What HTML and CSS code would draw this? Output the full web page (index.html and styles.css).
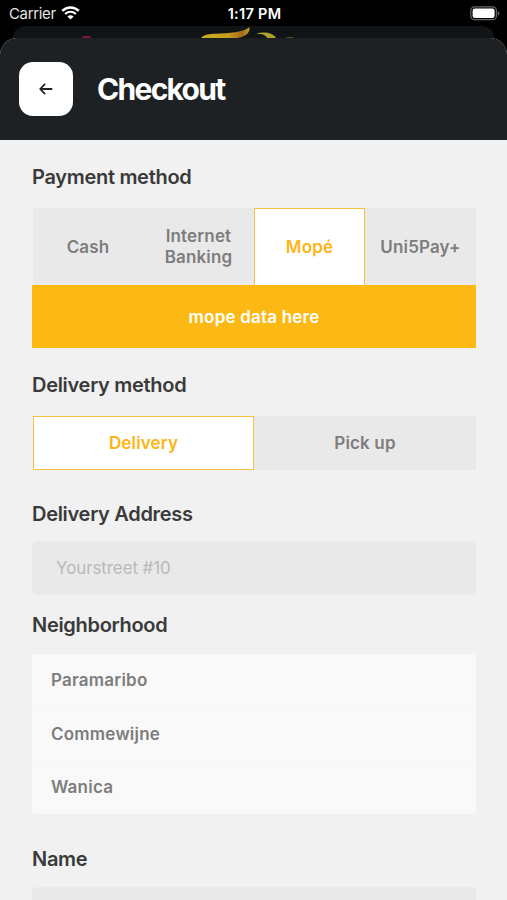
FILE: index.html
```html
<!DOCTYPE html>
<html lang="en">
<head>
    <meta charset="UTF-8">
    <meta name="viewport" content="width=device-width, initial-scale=1.0">
    <title>Checkout</title>
    <link rel="stylesheet" href="styles.css">
</head>
<body>

    <div class="status-bar">
        <div class="carrier">
            <span>Carrier</span>
            <svg class="wifi" width="19" height="14" viewBox="0 0 19 14">
                <path d="M1.2 4.9 C6 0.3 13 0.3 17.8 4.9" fill="none" stroke="#fff" stroke-width="2.6"/>
                <path d="M4.1 8 C7.3 5.1 11.7 5.1 14.9 8" fill="none" stroke="#fff" stroke-width="2.3"/>
                <path d="M6.4 10.4 C8.2 8.9 10.8 8.9 12.6 10.4 L9.5 13.6 Z" fill="#fff"/>
            </svg>
        </div>
        <span class="time">1:17 PM</span>
        <div class="power">
            <svg width="30" height="15" viewBox="0 0 30 15">
                <rect x="0.8" y="0.8" width="25.6" height="12.9" rx="3.8" fill="none" stroke="#666" stroke-width="1.2"/>
                <rect x="2.6" y="2.6" width="22" height="9.3" rx="2.2" fill="#fff"/>
                <path d="M27.8 5 C30 6 30 8.6 27.8 9.6 Z" fill="#666"/>
            </svg>
        </div>
    </div>

    <!-- previous screen peeking out behind the sheet -->
    <div class="back-card">
        <svg width="481" height="12" viewBox="13 26 481 12">
            <ellipse cx="86.5" cy="38.5" rx="5" ry="2.8" fill="#7d1836"/>
            <defs>
                <linearGradient id="gold" x1="0" y1="0" x2="1" y2="0">
                    <stop offset="0" stop-color="#c2b120"/>
                    <stop offset="0.55" stop-color="#c9a01c"/>
                    <stop offset="0.85" stop-color="#a8681a"/>
                    <stop offset="1" stop-color="#b5a524"/>
                </linearGradient>
            </defs>
            <path d="M201 38 C204 34.5 209 34 216 33.8 C229 33.5 244 32 249.5 27 C250 32 247 35 243 36.5 C240 37.6 238 38 234 38 Z" fill="url(#gold)"/>
            <path d="M256 33.5 C264 31 274 33 276 38 L267 38 C266 35 262 34 256 33.5 Z" fill="#aaa129"/>
            <path d="M285 38 C288 36.8 292 36.8 295 38 Z" fill="#65572c"/>
        </svg>
    </div>

    <div class="sheet">
        <header class="header">
            <button class="back-button" aria-label="Back">
                <svg width="14" height="12" viewBox="0 0 14 12" fill="none" stroke="#222" stroke-width="1.8" stroke-linecap="round" stroke-linejoin="round">
                    <path d="M12.6 6 H1.5 M5.6 1.4 L1.2 6 L5.6 10.6"/>
                </svg>
            </button>
            <h1>Checkout</h1>
        </header>

        <main class="content">
            <h2>Payment method</h2>
            <div class="tabs payment-tabs">
                <div class="tab">Cash</div>
                <div class="tab">Internet Banking</div>
                <div class="tab active">Mopé</div>
                <div class="tab">Uni5Pay+</div>
            </div>
            <div class="payment-data">mope data here</div>

            <h2 class="delivery-title">Delivery method</h2>
            <div class="tabs delivery-tabs">
                <div class="tab active">Delivery</div>
                <div class="tab">Pick up</div>
            </div>

            <h2 class="address-title">Delivery Address</h2>
            <input type="text" class="field" placeholder="Yourstreet #10">

            <h2 class="neighborhood-title">Neighborhood</h2>
            <ul class="options">
                <li>Paramaribo</li>
                <li>Commewijne</li>
                <li>Wanica</li>
            </ul>

            <h2 class="name-title">Name</h2>
            <input type="text" class="field">
        </main>
    </div>

</body>
</html>
```
FILE: styles.css
```css
* {
    box-sizing: border-box;
}

body {
    margin: 0;
    height: 900px;
    overflow: hidden;
    background-color: #000;
    font-family: Inter, 'Liberation Sans', sans-serif;
    color: #3a3a3a;
}

.status-bar {
    display: grid;
    grid-template-columns: 1fr auto 1fr;
    align-items: center;
    height: 26px;
    padding: 0 7px 0 9px;
    color: #fff;
    font-size: 15px;
    line-height: 24px;
}

.carrier {
    display: flex;
    align-items: center;
    gap: 5px;
    color: #e4e4e4;
    letter-spacing: -0.35px;
}

.carrier span {
    padding-top: 2px;
}

.wifi {
    margin-top: -1px;
}

.time {
    padding-top: 1px;
    font-size: 14.5px;
    font-weight: 600;
    letter-spacing: 0.3px;
}

.power {
    display: flex;
    justify-content: flex-end;
}

.back-card {
    height: 12px;
    margin: 0 13px;
    background-color: #101417;
    border-radius: 14px 14px 0 0;
}

.back-card svg {
    display: block;
}

.sheet {
    height: 862px;
    overflow: hidden;
    background-color: #f1f1f1;
    border-radius: 17px 17px 0 0;
}

.header {
    display: flex;
    align-items: center;
    gap: 24px;
    height: 102px;
    padding: 0 19px;
    background-color: #1d2123;
}

.back-button {
    display: flex;
    align-items: center;
    justify-content: center;
    width: 54px;
    height: 54px;
    padding: 0 1px 0 0;
    border: none;
    border-radius: 14px;
    background-color: #fff;
}

h1 {
    margin: 0;
    font-size: 30px;
    font-weight: 650;
    letter-spacing: -1.7px;
    color: #fff;
}

.content {
    padding: 25px 31px 0 32px;
}

h2 {
    margin: 0 0 19px;
    font-size: 20px;
    font-weight: 600;
    line-height: 24px;
    letter-spacing: -0.3px;
}

.tabs {
    display: grid;
    margin-left: 1px;
    background-color: #e9e9e9;
}

.tab {
    display: flex;
    align-items: center;
    justify-content: center;
    font-size: 17px;
    font-weight: 600;
    line-height: 21px;
    letter-spacing: 0.15px;
    text-align: center;
    color: #7d7d7d;
}

.tab.active {
    border: 1px solid #fbc040;
    background-color: #fff;
    color: #fdb515;
}

.payment-tabs {
    grid-template-columns: 110px 111px 111px 111px;
    height: 77px;
}

.payment-tabs .tab {
    padding-top: 1px;
}

.payment-tabs .active {
    padding-top: 0;
    border-bottom: none;
}

.delivery-tabs {
    grid-template-columns: 221px 222px;
    height: 54px;
}

.payment-data {
    height: 63px;
    padding-top: 1px;
    background-color: #fdb913;
    color: #fff;
    font-size: 17px;
    font-weight: 600;
    line-height: 63px;
    letter-spacing: 0.2px;
    text-align: center;
}

.delivery-title {
    margin-top: 25px;
}

.address-title {
    margin: 32px 0 15px;
}

.field {
    display: block;
    width: 100%;
    height: 54px;
    padding: 0 24px;
    border: none;
    border-radius: 5px;
    background-color: #e9e9e9;
    font-family: inherit;
    font-size: 17px;
    letter-spacing: -0.1px;
}

.field::placeholder {
    color: #b9b9b9;
}

.neighborhood-title {
    margin: 18px 0 17px;
}

.options {
    margin: 0;
    padding: 0;
    list-style: none;
    border-radius: 4px;
    background-color: #f9f9f9;
}

.options li {
    height: 54px;
    padding-left: 19px;
    border-bottom: 1px solid #f5f5f5;
    font-size: 17px;
    font-weight: 600;
    line-height: 52px;
    letter-spacing: 0.22px;
    color: #7d7d7d;
}

.options li:last-child {
    height: 52px;
    border-bottom: none;
    line-height: 50px;
}

.name-title {
    margin: 33px 0 16px;
}
```
